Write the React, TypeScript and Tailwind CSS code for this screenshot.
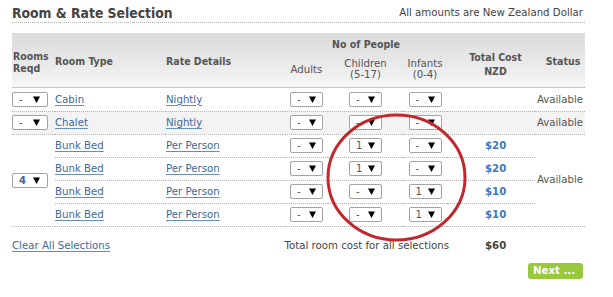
const body = "font-['DejaVu_Sans',sans-serif]";
const cond = "font-['DejaVu_Sans_Condensed','DejaVu_Sans',sans-serif] [font-stretch:condensed]";

function Drop({ v, wide, bold }: { v: string; wide?: boolean; bold?: boolean }) {
  return (
    <div
      className={`relative inline-block h-[15px] align-middle rounded-[2px] border border-[#a3a3a3] bg-white ${
        wide ? "w-[36px]" : "w-[33px]"
      }`}
    >
      <span
        className={`absolute left-[6px] top-[0px] text-[10px] leading-[13px] ${
          bold ? "font-bold text-[#46668a]" : "text-[#555]"
        }`}
      >
        {v}
      </span>
      <svg
        className={`absolute top-[3px] ${wide ? "right-[7px]" : "right-[6px]"}`}
        width="7"
        height="7"
        viewBox="0 0 7 7"
      >
        <path d="M0 0.5H7L3.5 7Z" fill="#000" />
      </svg>
    </div>
  );
}

const link = "text-[#40699a] underline underline-offset-2 decoration-[#6a8db5]";
const cell = "h-[23px] p-0 align-middle border-b border-dotted border-[#b3b3b3]";
const cost = "pl-[38px] font-bold text-[#3d79bd]";

export default function App() {
  return (
    <div className={`relative h-[297px] w-[613px] bg-white pl-[12px] pt-[5px] text-[10.2px] text-[#555] ${body}`}>
      {/* title */}
      <div className="flex w-[573px] items-end justify-between border-b border-dotted border-[#b3b3b3] pr-[2px]">
        <h1 className={`text-[13.8px] leading-[17px] font-bold text-[#444] ${cond}`}>Room &amp; Rate Selection</h1>
        <span className="mb-[3px] text-[10.2px] leading-[12px] text-[#444]">All amounts are New Zealand Dollar</span>
      </div>

      {/* header band */}
      <div
        className={`mt-[10px] grid h-[55px] w-[573px] grid-cols-[43px_111px_119px_43px_75px_44px_88px_50px] grid-rows-[20px_34px] border-b border-dotted border-[#b3b3b3] bg-gradient-to-b from-[#dadada] to-[#f6f6f6] text-[10.5px] text-[#555]`}
      >
        <div className={`row-span-2 pt-[17px] pl-[1px] leading-[12px] font-bold ${cond}`}>
          Rooms
          <br />
          Reqd
        </div>
        <div className={`row-span-2 pt-[22px] leading-[13px] font-bold ${cond}`}>Room Type</div>
        <div className={`row-span-2 pt-[22px] leading-[13px] font-bold ${cond}`}>Rate Details</div>
        <div className={`col-span-3 pt-[5px] text-center leading-[13px] font-bold ${cond}`}>No of People</div>
        <div className={`row-span-2 col-start-7 row-start-1 pt-[17px] pl-[9px] text-center leading-[14px] font-bold ${cond}`}>
          Total Cost
          <br />
          NZD
        </div>
        <div className={`row-span-2 col-start-8 row-start-1 pt-[22px] pl-[6px] text-center leading-[13px] font-bold ${cond}`}>
          Status
        </div>
        <div className="col-start-4 row-start-2 pt-[10px] text-center text-[10.2px] leading-[13px]">Adults</div>
        <div className="col-start-5 row-start-2 pt-[5px] text-center text-[10.2px] leading-[11px]">
          Children
          <br />
          (5-17)
        </div>
        <div className="col-start-6 row-start-2 pt-[5px] text-center text-[10.2px] leading-[11px]">
          Infants
          <br />
          (0-4)
        </div>
      </div>

      {/* rows */}
      <table className="w-[573px] table-fixed border-collapse">
        <colgroup>
          <col className="w-[43px]" />
          <col className="w-[111px]" />
          <col className="w-[119px]" />
          <col className="w-[43px]" />
          <col className="w-[75px]" />
          <col className="w-[44px]" />
          <col className="w-[88px]" />
          <col className="w-[50px]" />
        </colgroup>
        <tbody>
          <tr>
            <td className={cell}><Drop v="-" wide /></td>
            <td className={cell}><a className={link}>Cabin</a></td>
            <td className={cell}><a className={link}>Nightly</a></td>
            <td className={`${cell} text-center`}><Drop v="-" /></td>
            <td className={`${cell} text-center`}><Drop v="-" /></td>
            <td className={`${cell} text-center`}><Drop v="-" /></td>
            <td className={cell}></td>
            <td className={`${cell} pr-[2px] text-right`}>Available</td>
          </tr>
          <tr className="bg-[#f3f3f3]">
            <td className={cell}><Drop v="-" wide /></td>
            <td className={cell}><a className={link}>Chalet</a></td>
            <td className={cell}><a className={link}>Nightly</a></td>
            <td className={`${cell} text-center`}><Drop v="-" /></td>
            <td className={`${cell} text-center`}><Drop v="-" /></td>
            <td className={`${cell} text-center`}><Drop v="-" /></td>
            <td className={cell}></td>
            <td className={`${cell} pr-[2px] text-right`}>Available</td>
          </tr>
          <tr>
            <td rowSpan={4} className={cell}><Drop v="4" wide bold /></td>
            <td className={cell}><a className={link}>Bunk Bed</a></td>
            <td className={cell}><a className={link}>Per Person</a></td>
            <td className={`${cell} text-center`}><Drop v="-" /></td>
            <td className={`${cell} text-center`}><Drop v="1" /></td>
            <td className={`${cell} text-center`}><Drop v="-" /></td>
            <td className={`${cell} ${cost}`}>$20</td>
            <td rowSpan={4} className={`${cell} pr-[2px] text-right`}>Available</td>
          </tr>
          <tr>
            <td className={cell}><a className={link}>Bunk Bed</a></td>
            <td className={cell}><a className={link}>Per Person</a></td>
            <td className={`${cell} text-center`}><Drop v="-" /></td>
            <td className={`${cell} text-center`}><Drop v="1" /></td>
            <td className={`${cell} text-center`}><Drop v="-" /></td>
            <td className={`${cell} ${cost}`}>$20</td>
          </tr>
          <tr>
            <td className={cell}><a className={link}>Bunk Bed</a></td>
            <td className={cell}><a className={link}>Per Person</a></td>
            <td className={`${cell} text-center`}><Drop v="-" /></td>
            <td className={`${cell} text-center`}><Drop v="-" /></td>
            <td className={`${cell} text-center`}><Drop v="1" /></td>
            <td className={`${cell} ${cost}`}>$10</td>
          </tr>
          <tr>
            <td className={cell}><a className={link}>Bunk Bed</a></td>
            <td className={cell}><a className={link}>Per Person</a></td>
            <td className={`${cell} text-center`}><Drop v="-" /></td>
            <td className={`${cell} text-center`}><Drop v="-" /></td>
            <td className={`${cell} text-center`}><Drop v="1" /></td>
            <td className={`${cell} ${cost}`}>$10</td>
          </tr>
        </tbody>
      </table>

      {/* totals */}
      <div className="mt-[13px] flex w-[573px] leading-[12px]">
        <a className={`w-[200px] shrink-0 ${link}`}>Clear All Selections</a>
        <span className="w-[237px] shrink-0 whitespace-nowrap text-right text-[#444]">Total room cost for all selections</span>
        <span className="ml-[36px] font-bold text-[#444]">$60</span>
      </div>

      <div className="mt-[11px] flex w-[573px] justify-end pr-[2px]">
        <button className="h-[16px] w-[55px] rounded-[3px] bg-[#98c83c] pl-[5px] text-left text-[10.2px] leading-[16px] font-bold text-white">
          Next ...
        </button>
      </div>

      {/* red annotation circle */}
      <svg className="absolute left-[326px] top-[113px]" width="141" height="129" viewBox="0 0 141 129">
        <ellipse cx="70.5" cy="64.5" rx="68.5" ry="62.5" fill="none" stroke="#c1272d" strokeWidth="3" />
      </svg>
    </div>
  );
}
